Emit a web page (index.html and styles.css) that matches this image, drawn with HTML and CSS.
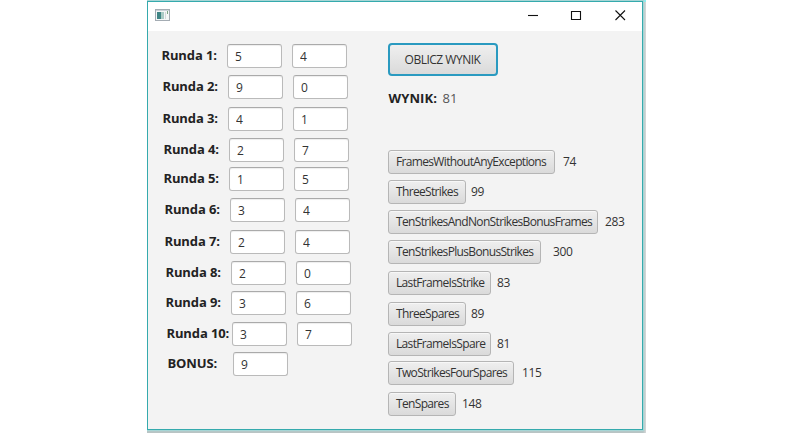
FILE: index.html
```html
<!DOCTYPE html>
<html lang="pl">
<head>
<meta charset="utf-8">
<title>Kręgle</title>
<link rel="stylesheet" href="styles.css">
</head>
<body>
<div class="desktop">
<main class="window">
  <header class="titlebar">
    <svg class="app-icon" width="15" height="12" viewBox="0 0 15 12"><rect x=".5" y=".5" width="14" height="11" fill="#f4f6f7" stroke="#a4acb3"/><path d="M1 1.5h13" stroke="#cbd2d8"/><path d="M2 3h4v7H2z" fill="#3f8585"/><path d="M6 3h3v7H6z" fill="#a9cac5"/><path d="M10 3h1v7h-1z" fill="#d3d8da"/><path d="M12 2h1v3h-1z" fill="#7ba584"/></svg>
    <svg class="controls" width="98" height="12" viewBox="0 0 98 12" fill="none" stroke="#111" stroke-width="1.1"><path d="M0 5.5h10"/><path d="M43.5 1.5h9v8h-9z"/><path d="M87.5 .5l9.5 9.5M97 .5l-9.5 9.5"/></svg>
  </header>
  <div class="content">
    <section class="rounds">
      <div class="round"><label>Runda 1:</label><input value="5"><input value="4"></div>
      <div class="round r2"><label>Runda 2:</label><input value="9"><input value="0"></div>
      <div class="round r3"><label>Runda 3:</label><input value="4"><input value="1"></div>
      <div class="round r4"><label>Runda 4:</label><input value="2"><input value="7"></div>
      <div class="round r5"><label>Runda 5:</label><input value="1"><input value="5"></div>
      <div class="round r6"><label>Runda 6:</label><input value="3"><input value="4"></div>
      <div class="round r7"><label>Runda 7:</label><input value="2"><input value="4"></div>
      <div class="round r8"><label>Runda 8:</label><input value="2"><input value="0"></div>
      <div class="round r9"><label>Runda 9:</label><input value="3"><input value="6"></div>
      <div class="round r10"><label>Runda 10:</label><input value="3"><input value="7"></div>
      <div class="round bonus"><label>BONUS:</label><input value="9"></div>
    </section>
    <section class="results">
      <button class="calculate">OBLICZ WYNIK</button>
      <p class="score"><strong>WYNIK:</strong><span>81</span></p>
      <div class="case frames"><button>FramesWithoutAnyExceptions</button><span>74</span></div>
      <div class="case three-strikes"><button>ThreeStrikes</button><span>99</span></div>
      <div class="case non-strikes"><button>TenStrikesAndNonStrikesBonusFrames</button><span>283</span></div>
      <div class="case plus-bonus"><button>TenStrikesPlusBonusStrikes</button><span>300</span></div>
      <div class="case last-strike"><button>LastFrameIsStrike</button><span>83</span></div>
      <div class="case three-spares"><button>ThreeSpares</button><span>89</span></div>
      <div class="case last-spare"><button>LastFrameIsSpare</button><span>81</span></div>
      <div class="case two-strikes"><button>TwoStrikesFourSpares</button><span>115</span></div>
      <div class="case ten-spares"><button>TenSpares</button><span>148</span></div>
    </section>
  </div>
</main>
</div>
</body>
</html>
```
FILE: styles.css
```css
* { box-sizing: border-box; }
body { margin: 0; background: #fff; font: 12px/16px "Open Sans", "Noto Sans", sans-serif; color: #333; }
.desktop { width: 499px; height: 433px; margin-left: 147px; padding-top: 1px; overflow: hidden;
  background: linear-gradient(#8deeee 0 2px, transparent 2px), linear-gradient(90deg, #b9c4c4 0, #b9c4c4 496px, #d6d9d9 499px); }
.window { width: 496px; height: 429px; border: 1px solid #35aaad; background: #f3f3f3; box-shadow: 0 0 1px 1px #a6d5d5; }
.titlebar { height: 29px; background: #fff; display: flex; justify-content: space-between; align-items: flex-start; padding: 8px 16px 0 7px; }
.app-icon { margin-top: -1px; }
.content { display: flex; padding: 13px 0 0 14px; }
.rounds { width: 226px; }
.round { display: flex; height: 24px; }
label { width: 65px; font-size: 13px; font-weight: 700; line-height: 23px; letter-spacing: -.1px; text-indent: -.6px; color: #222; white-space: nowrap; }
input { width: 55px; height: 24px; margin: 0 10px 0 0; padding: 0 7px; border: 1px solid #bababa; border-top-color: #aaa; border-radius: 3px; background: #fff; font: inherit; color: #333; box-shadow: inset 0 1px 1px #eee; }
.r2 { margin: 7px 0 0 1px; }
.r3 { margin: 8px 0 0 1px; }
.r4 { margin: 7px 0 0 2px; }
.r5 { margin: 5px 0 0 2px; }
.r6 { margin: 7px 0 0 3px; }
.r7 { margin: 8px 0 0 3px; }
.r8 { margin: 7px 0 0 4px; }
.r9 { margin: 6px 0 0 4px; }
.r10 { margin: 7px 0 0 5px; }
.bonus { margin: 6px 0 0 6px; }
button { height: 24px; padding: 0 0 0 7px; border: 1px solid #b5b5b5; border-radius: 3px; background: linear-gradient(#efefef, #dadada); box-shadow: inset 0 1px #f7f7f7; font: inherit; color: #333; text-align: left; white-space: nowrap; }
.calculate { display: block; width: 110px; height: 33px; margin-top: -1px; padding: 1px 1px 0 0; text-align: center; border: 2px solid #2a9ac0; border-radius: 4px; box-shadow: none; letter-spacing: -.5px; }
.score { display: flex; margin: 14px 0 44px; font-size: 13px; color: #555; }
.score strong { width: 54.5px; color: #222; letter-spacing: .1px; text-indent: .5px; }
.case { display: flex; height: 24px; line-height: 24px; letter-spacing: -.3px; }
.case button { line-height: 20px; padding-bottom: 1px; letter-spacing: -.66px; }
.frames button { width: 167px; margin-right: 8px; }
.three-strikes, .non-strikes, .plus-bonus, .last-spare { margin-top: 6px; }
.three-strikes button, .three-spares button { width: 78px; margin-right: 5px; }
.non-strikes button { width: 210px; margin-right: 7px; }
.plus-bonus button { width: 153px; margin-right: 12px; }
.last-strike, .three-spares, .ten-spares { margin-top: 7px; }
.last-strike button, .last-spare button { width: 103px; margin-right: 6px; }
.two-strikes { margin-top: 5px; }
.two-strikes button { width: 126px; margin-right: 8px; }
.ten-spares button { width: 68px; margin-right: 6px; }
```
